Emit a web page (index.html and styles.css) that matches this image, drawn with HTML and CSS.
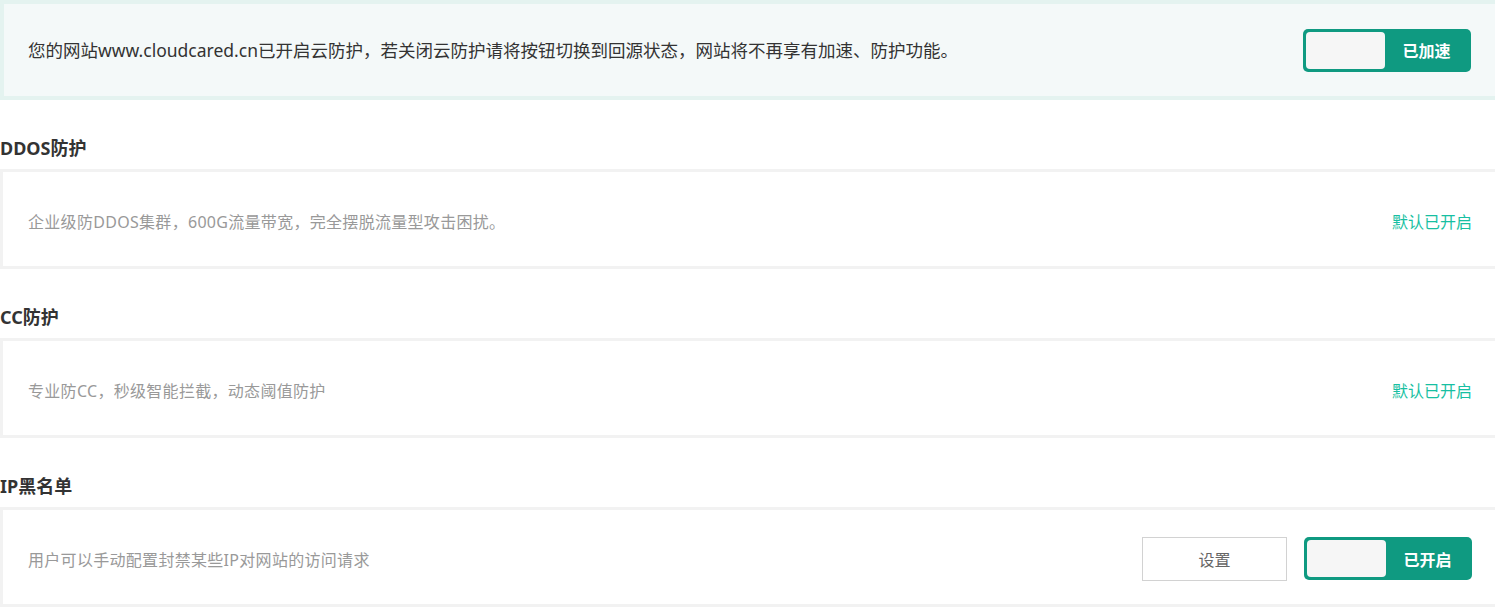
FILE: index.html
```html
<!DOCTYPE html>
<html lang="zh-CN">
<head>
<meta charset="utf-8">
<title>云防护</title>
<link rel="stylesheet" href="styles.css">
</head>
<body>
<div class="page">
  <div class="banner">
    <p class="banner-text">您的网站www.cloudcared.cn已开启云防护，若关闭云防护请将按钮切换到回源状态，网站将不再享有加速、防护功能。</p>
    <div class="switch">
      <span class="knob"></span>
      <span class="switch-label">已加速</span>
    </div>
  </div>

  <h2 class="section-title">DDOS防护</h2>
  <div class="card">
    <p class="card-text">企业级防DDOS集群，600G流量带宽，完全摆脱流量型攻击困扰。</p>
    <span class="status">默认已开启</span>
  </div>

  <h2 class="section-title">CC防护</h2>
  <div class="card">
    <p class="card-text">专业防CC，秒级智能拦截，动态阈值防护</p>
    <span class="status">默认已开启</span>
  </div>

  <h2 class="section-title">IP黑名单</h2>
  <div class="card">
    <p class="card-text">用户可以手动配置封禁某些IP对网站的访问请求</p>
    <div class="actions">
      <button class="btn-setting" type="button">设置</button>
      <div class="switch">
        <span class="knob"></span>
        <span class="switch-label">已开启</span>
      </div>
    </div>
  </div>
</div>
</body>
</html>
```

FILE: styles.css
```css
* { box-sizing: border-box; }
html, body {
  margin: 0;
  padding: 0;
  background: #fff;
}
body {
  font-family: "Noto Sans", "Noto Sans CJK SC", sans-serif;
  color: #333;
  overflow: hidden;
}
.page {
  width: 100%;
}
.banner {
  height: 100px;
  background: #f4f9f9;
  border-style: solid;
  border-color: #e4f3f0;
  border-width: 4px 0 4px 4px;
  display: flex;
  align-items: center;
  justify-content: space-between;
  padding: 0 24px 0 24px;
}
.banner-text {
  margin: 0;
  font-size: 17.5px;
  color: #333;
  line-height: 24px;
}
.switch {
  width: 168px;
  height: 43px;
  background: #0f9a81;
  border-radius: 5px;
  padding: 3px;
  display: flex;
  align-items: stretch;
}
.knob {
  width: 79px;
  background: #f6f6f6;
  border-radius: 4px;
}
.switch-label {
  flex: 1;
  display: flex;
  align-items: center;
  justify-content: center;
  color: #fff;
  font-weight: bold;
  font-size: 16px;
}
.section-title {
  margin: 0;
  height: 69px;
  padding-top: 36px;
  line-height: 24px;
  font-size: 18px;
  font-weight: bold;
  color: #333;
}
.card {
  height: 100px;
  border-style: solid;
  border-color: #f2f2f2;
  border-width: 3px 0 3px 3px;
  display: flex;
  align-items: center;
  justify-content: space-between;
  padding: 3px 23px 0 25px;
}
.card-text {
  margin: 0;
  font-size: 16px;
  letter-spacing: 0.3px;
  color: #999;
}
.status {
  font-size: 16px;
  color: #17bfa2;
}
.actions {
  display: flex;
  align-items: center;
  gap: 17px;
}
.btn-setting {
  width: 145px;
  height: 44px;
  border: 1px solid #d2d2d2;
  background: #fff;
  color: #666;
  font-family: inherit;
  font-size: 16px;
  padding: 0;
}
```
